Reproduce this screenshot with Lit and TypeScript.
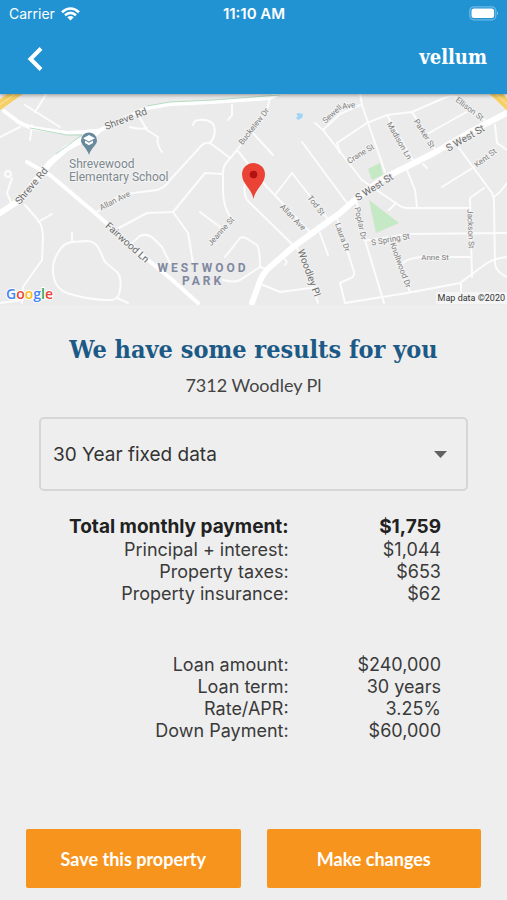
import { LitElement, html, svg, css } from "lit";
import { customElement, state } from "lit/decorators.js";

type StreetLabel = [name: string, x: number, y: number, angle: number, major?: boolean];
type Row = [label: string, value: string, strong?: boolean];

const STREETS: string[] = [
  "M12 84L7 99L12 111M5 80a3 3 0 1 1 6 0a3 3 0 1 1-6 0",
  "M25 111L38 126Q43 133 43 143L42 166L23 193L22 209",
  "M38 128L52 120",
  "M72 148Q66 149 62 153Q52 165 53 178Q54 194 67 199Q92 207 112 206Q119 205 120 196Q122 184 117 178L105 168L99 155Q95 147 87 147Z",
  "M117 204L128 209M72 139V148M0 209L23 206",
  "M97 118L113 106Q122 100 133 99L157 96Q166 93 170 86L202 51Q206 48 210 49L230 64",
  "M115 136L147 119L173 118L205 79L223 80",
  "M132 149L140 142Q147 139 153 144L162 153L170 169",
  "M25 11L60 33M47 -1L35 18M32 31L30 46M0 43L20 33",
  "M140 24L147 36L158 43Q156 50 162 58M130 33Q140 36 147 34",
  "M270 4L267 16L237 56L226 69Q222 75 223 83L223 98Q224 118 234 126",
  "M237 56L267 93L310 138",
  "M246 84Q242 100 248 107L293 151L297 154L310 183L318 209",
  "M275 101L292 79L327 124",
  "M302 48L347 109",
  "M193 31Q194 26 200 26Q211 25 214 32Q217 41 210 49",
  "M232 11V21L228 26M252 38L273 61",
  "M315 29L323 36L362 86L400 112Q403 114 407 114H470",
  "M323 36L340 20L360 11",
  "M173 118L188 139L193 169M200 118L220 133",
  "M225 163L240 144Q244 142 249 146L257 151Q260 156 260 173L240 186Q234 189 223 186M260 173L266 175",
  "M263 191L280 198L318 193M320 139L328 161M283 163L287 168L285 171",
  "M337 49L367 29L387 21L412 18L444 4Q451 1 457 3L487 28",
  "M360 -1L362 11L374 46L385 78M337 49L340 59",
  "M387 21L414 68M412 18L437 58M429 39L470 16",
  "M407 76L415 96L417 113M423 70L427 74M389 116L396 109",
  "M459 54L492 99Q494 103 494 108L495 170Q496 178 507 183",
  "M442 93L490 63M484 94L470 104L472 183",
  "M364 146H372L407 140L507 139",
  "M402 171Q405 164 424 163H470",
  "M345 209L407 199L460 189L487 169Q496 164 507 163M461 189V198",
  "M357 109L365 146L384 209M392 149L410 198",
  "M337 124L354 178Q355 182 351 184L340 189L345 209",
  "M495 31L497 49L507 56M494 103Q502 97 507 89",
];

const ROADS: string[] = [
  "M4 17L20 29Q30 34 40 35L67 39L97 37",
  "M97 38L110 31L147 14L170 10L213 8L270 4L282 -2",
  "M27 68L50 81L95 119L148 166L170 184L198 209",
];

const MAIN_ROADS: string[] = [
  "M0 119L20 106L50 69L67 54L97 38",
  "M252 209L260 187Q264 178 270 173L293 153L340 119L357 104L384 84L404 74L434 59L470 38L507 19",
];

const LABELS: StreetLabel[] = [
  ["Shreve Rd", 127, 28, -21, true],
  ["Shreve Rd", 34, 94, -50, true],
  ["Fairwood Ln", 125, 151, 42, true],
  ["Woodley Pl", 306, 180, 70, true],
  ["S West St", 467, 47, -30, true],
  ["S West St", 376, 96, -32, true],
  ["Allan Ave", 116, 109, -27],
  ["Buckelew Dr", 256, 34, -52],
  ["Jeanne St", 223, 139, -48],
  ["Allan Ave", 291, 125, 46],
  ["Tod St", 314, 113, 52],
  ["Sewell", 334, 22, -42],
  ["Ave", 349, 14, -8],
  ["Crane St", 362, 62, -32],
  ["Madison Ln", 397, 48, 60],
  ["Parker St", 422, 41, 58],
  ["Ellison St", 468, 17, 37],
  ["Kent St", 487, 66, -38],
  ["Poplar Dr", 358, 130, 78],
  ["Laura Dr", 340, 144, 70],
  ["S Spring St", 391, 148, -10],
  ["Knollwood Dr", 398, 172, 70],
  ["Anne St", 435, 166, 0],
  ["Jackson St", 468, 135, 88],
];

@customElement("property-map")
export class PropertyMap extends LitElement {
  static styles = css`
    :host { display: block; }
    .map { display: block; width: 100%; height: auto; background: #ebebeb; font-family: Roboto, sans-serif; }
    .line { fill: none; stroke: #fff; stroke-linejoin: round; stroke-linecap: round; }
    .street { stroke-width: 2; stroke: #fcfcfc; }
    .road { stroke-width: 4; }
    .main { stroke-width: 6; }
    .trail { stroke: #b5dcc0; stroke-width: 1; }
    .highway { stroke: #f6cf65; stroke-width: 9; }
    .lane { stroke: #fbe7a8; stroke-width: 1; }
    .park { fill: #c5e8c5; }
    .water { fill: #9fd3f7; }
    .name { font-size: 8px; fill: #808080; text-anchor: middle; stroke: #f3f3f3; stroke-width: 2px; paint-order: stroke; }
    .major { font-size: 10px; fill: #6c6c6c; }
    .school { font-size: 12px; fill: #7d888f; stroke: #f3f3f3; stroke-width: 2px; paint-order: stroke; }
    .area { font-size: 12px; font-weight: 700; fill: #8088a0; text-anchor: middle; letter-spacing: 3px; }
    .credit { font-size: 9px; fill: #333; text-anchor: end; }
    .credit-bg { fill: #f5f5f5; }
    .google { font: 600 14px "Open Sans", sans-serif; stroke: #fff; stroke-width: 2px; paint-order: stroke; }
    .b { fill: #4285f4; }
    .r { fill: #ea4335; }
    .y { fill: #fbbc05; }
    .g { fill: #34a853; }
  `;

  render() {
    return html`
      <svg class="map" viewBox="0 0 507 211" role="img" aria-label="Map around 7312 Woodley Pl">
        <path class="park" d="M368 75L380 69L383 81L372 86ZM369 106L399 129L376 139Z" />
        <path class="water" d="M296 20l3-1l4 1l-1 4l-4 2l-2-2l2-2z" />
        ${STREETS.map((d) => svg`<path class="line street" d=${d} />`)}
        ${ROADS.map((d) => svg`<path class="line road" d=${d} />`)}
        ${MAIN_ROADS.map((d) => svg`<path class="line main" d=${d} />`)}
        <path class="line trail" d="M30 34L67 41L82 41L56 60M147 12L170 8L213 6L280 1" />
        <path class="line highway" d="M-6 15L22 -5M491 -5L511 14" />
        <path class="line lane" d="M-6 15L22 -5M491 -5L511 14" />
        ${LABELS.map(
          ([name, x, y, angle, major]) =>
            svg`<text class=${major ? "name major" : "name"} transform="translate(${x} ${y}) rotate(${angle})">${name}</text>`
        )}
        <text class="school" x="69" y="74">Shrevewood</text>
        <text class="school" x="69" y="87">Elementary School</text>
        <text class="area" x="203" y="178">WESTWOOD</text>
        <text class="area" x="203" y="191">PARK</text>
        <path fill="#688a9c" d="M89 61C87 54 81 51 81 46.500a8 8 0 1 1 16 0C97 51 91 54 89 61Z" />
        <path fill="#fff" d="M89 41l6 3.300l-6 3.300l-6-3.300ZM85 46.500l4 2.200l4-2.200v2.500l-4 2.200l-4-2.200Z" />
        <path fill="#ea4335" d="M253.500 105C252 95 242 90 242 80.500a11.500 11.500 0 1 1 23 0C265 90 255 95 253.500 105Z" />
        <circle fill="#b11313" cx="253.500" cy="80.500" r="3.800" />
        <text class="google" x="6" y="205"><tspan class="b">G</tspan><tspan class="r">o</tspan><tspan class="y">o</tspan><tspan class="b">g</tspan><tspan class="g">l</tspan><tspan class="r">e</tspan></text>
        <rect class="credit-bg" x="436" y="198" width="71" height="12" />
        <text class="credit" x="505" y="207">Map data ©2020</text>
      </svg>
    `;
  }
}

@customElement("figure-table")
export class FigureTable extends LitElement {
  static properties = { rows: { attribute: false }, caption: {} };
  declare rows: Row[];
  declare caption: string;

  static styles = css`
    :host { display: block; }
    table { width: 100%; border-collapse: collapse; table-layout: fixed; }
    th, td { padding: 0; text-align: right; font-size: 18px; line-height: 22px; font-weight: 400; color: #3a3a3a; white-space: nowrap; }
    th { width: 62%; }
    .strong th, .strong td { font-size: 19px; line-height: 24px; font-weight: 700; color: #212121; }
  `;

  render() {
    return html`
      <table aria-label=${this.caption}>
        <tbody>
          ${this.rows.map(
            ([label, value, strong]) => html`
              <tr class=${strong ? "strong" : ""}><th scope="row">${label}</th><td>${value}</td></tr>
            `
          )}
        </tbody>
      </table>
    `;
  }
}

@customElement("app-root")
export class AppRoot extends LitElement {
  @state() private payment: Row[] = [
    ["Total monthly payment:", "$1,759", true],
    ["Principal + interest:", "$1,044"],
    ["Property taxes:", "$653"],
    ["Property insurance:", "$62"],
  ];

  @state() private loan: Row[] = [
    ["Loan amount:", "$240,000"],
    ["Loan term:", "30 years"],
    ["Rate/APR:", "3.25%"],
    ["Down Payment:", "$60,000"],
  ];

  static styles = css`
    :host { display: flex; flex-direction: column; min-height: 100vh; background: #eee; font-family: Inter, sans-serif; }
    * { box-sizing: border-box; }
    .top { background: #2193d3; color: #fff; box-shadow: 0 1px 4px rgba(0, 0, 0, 0.4); z-index: 1; }
    .status { display: grid; grid-template-columns: 1fr auto 1fr; align-items: center; height: 27px; padding: 0 8px 0 9px; font-size: 14px; }
    .carrier { display: flex; align-items: center; gap: 6px; }
    .clock { font-size: 15px; font-weight: 600; }
    .battery { justify-self: end; }
    .bar { display: flex; align-items: center; justify-content: space-between; height: 67px; padding: 0 20px 4px; }
    .back { display: flex; padding: 4px; border: 0; background: none; color: inherit; }
    .brand { padding-bottom: 4px; font: 700 20px/24px "DejaVu Serif Condensed", "DejaVu Serif", serif; }
    main { display: flex; flex-direction: column; flex: 1; padding: 28px 26px 12px; }
    h1 { margin: 0; text-align: center; font: 700 25px/34px "DejaVu Serif Condensed", "DejaVu Serif", serif; color: #1c5a85; }
    .address { margin: 6px 0 20px; text-align: center; font: 400 18px/24px Lato, sans-serif; color: #444; }
    .picker { display: grid; align-items: center; margin: 0 13px; }
    .picker > * { grid-area: 1 / 1; }
    select { appearance: none; width: 100%; height: 74px; padding: 0 40px 0 12px; border: 2px solid #d6d6d6; border-radius: 5px; background: transparent; font: 400 19px Inter, sans-serif; color: #333; }
    .caret { justify-self: end; margin-right: 21px; pointer-events: none; }
    .figures { display: flex; flex-direction: column; gap: 49px; margin: 24px 40px 48px 14px; }
    .actions { display: grid; grid-template-columns: 1fr 1fr; gap: 26px; margin-top: auto; }
    .actions button { height: 59px; border: 0; border-radius: 2px; background: #f7941d; color: #fff; font: 700 18px Lato, sans-serif; }
  `;

  render() {
    return html`
      <header class="top">
        <div class="status">
          <span class="carrier">Carrier
            <svg width="19" height="14" viewBox="0 0 19 14" fill="none" stroke="#fff" stroke-width="2.600" aria-hidden="true">
              <path d="M1 5.200Q9.500-2.200 18 5.200M4 8.300Q9.500 3.600 15 8.300" />
              <path d="M6.300 10.300Q9.500 7.800 12.700 10.300L9.500 13.500Z" fill="#fff" stroke="none" />
            </svg>
          </span>
          <span class="clock">11:10 AM</span>
          <svg class="battery" width="30" height="15" viewBox="0 0 30 15" aria-hidden="true">
            <rect x="0.800" y="0.800" width="26" height="13" rx="4" fill="none" stroke="#6cb8e3" stroke-width="1.300" />
            <rect x="2.500" y="2.500" width="22.600" height="9.600" rx="2.500" fill="#fff" />
            <path d="M28 5.300Q30 7.300 28 9.300Z" fill="#8cc6e8" />
          </svg>
        </div>
        <div class="bar">
          <button class="back" aria-label="Back">
            <svg width="22" height="26" viewBox="0 0 22 26" fill="none" stroke="#fff" stroke-width="4" aria-hidden="true">
              <path d="M17 2.500L6.500 13L17 23.500" />
            </svg>
          </button>
          <span class="brand">vellum</span>
        </div>
      </header>
      <property-map></property-map>
      <main>
        <h1>We have some results for you</h1>
        <p class="address">7312 Woodley Pl</p>
        <div class="picker">
          <select aria-label="Loan type">
            <option>30 Year fixed data</option>
          </select>
          <svg class="caret" width="13" height="7" viewBox="0 0 13 7" aria-hidden="true"><path d="M0 0H13L6.500 7Z" fill="#616161" /></svg>
        </div>
        <div class="figures">
          <figure-table caption="Monthly payment" .rows=${this.payment}></figure-table>
          <figure-table caption="Loan details" .rows=${this.loan}></figure-table>
        </div>
        <div class="actions">
          <button>Save this property</button>
          <button>Make changes</button>
        </div>
      </main>
    `;
  }
}
